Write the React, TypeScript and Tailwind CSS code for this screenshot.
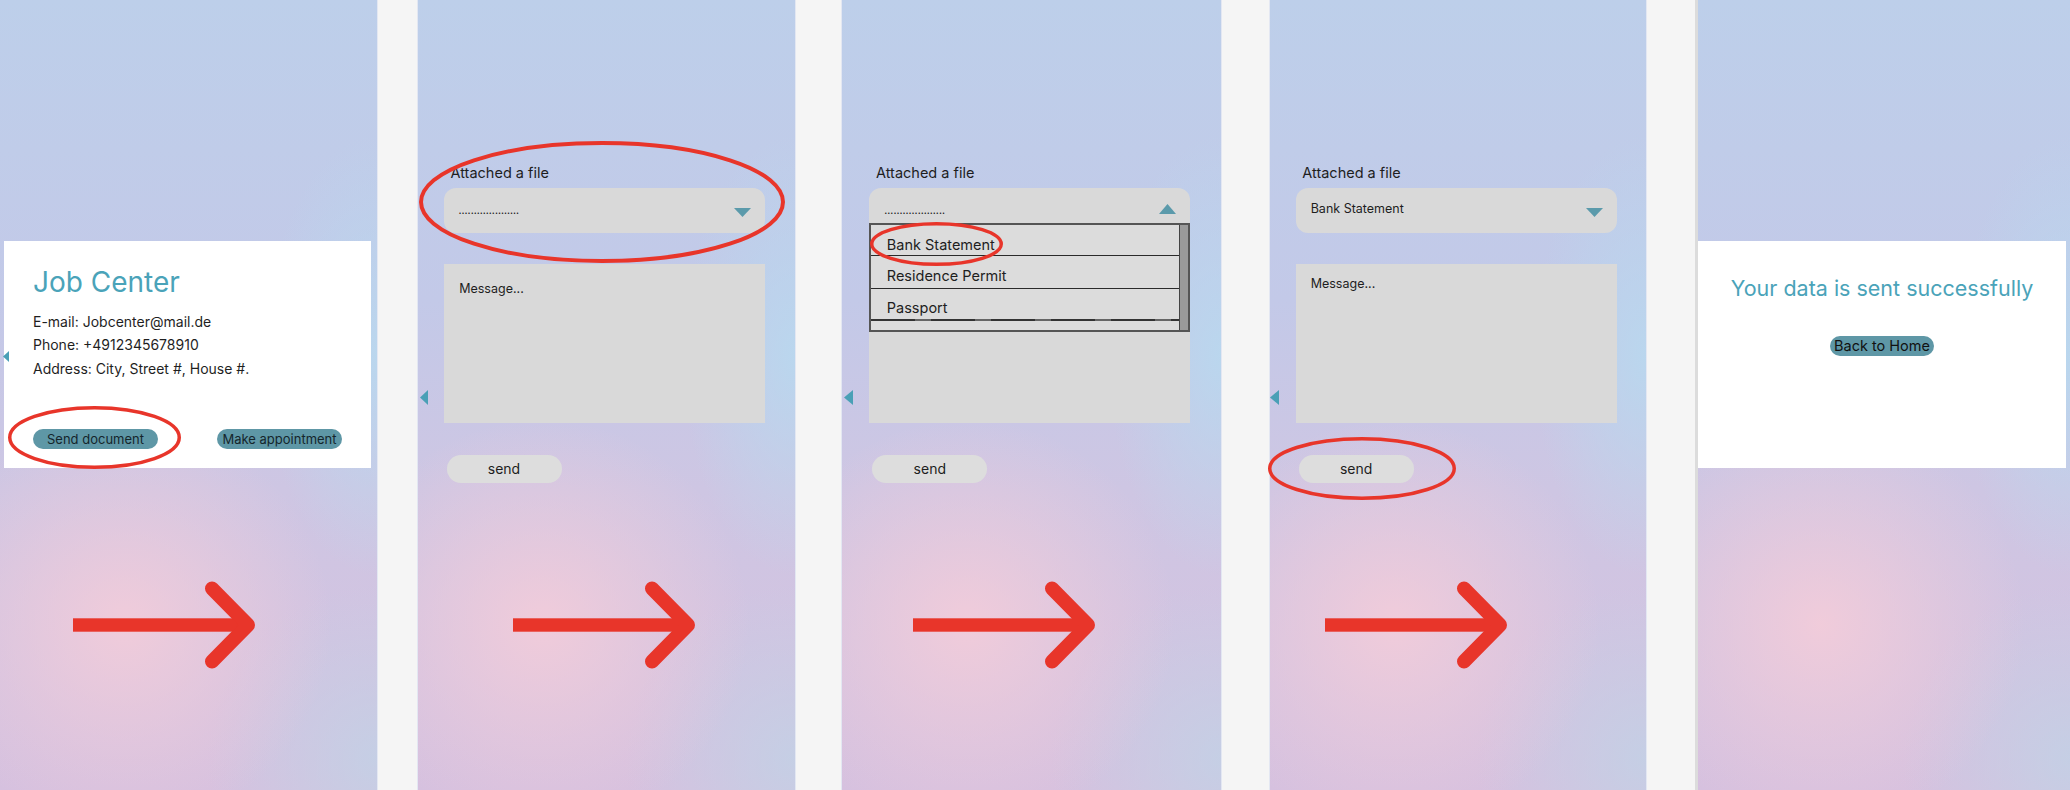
import React from "react";

const BG =
  "[background-image:radial-gradient(ellipse_55%_26%_at_33%_79%,rgba(242,204,218,0.95),rgba(242,204,218,0)),radial-gradient(ellipse_30%_28%_at_100%_45%,rgba(184,217,239,0.85),rgba(184,217,239,0)),radial-gradient(ellipse_45%_22%_at_100%_96%,rgba(193,210,230,0.8),rgba(193,210,230,0)),linear-gradient(180deg,#bdcfea_0%,#c3c9e8_38%,#cec6e3_62%,#d6c1df_100%)]";

function LeftTri({ className }: { className: string }) {
  return (
    <svg className={className} viewBox="0 0 9 15" preserveAspectRatio="none">
      <polygon points="9,0 9,15 0,7.5" fill="#4aa0b6" />
    </svg>
  );
}

function Arrow({ className }: { className: string }) {
  return (
    <svg className={className} width="190" height="96" viewBox="0 0 190 96">
      <rect x="0" y="42.3" width="175" height="13.4" fill="#e8352a" />
      <polyline
        points="139,12.5 175,49 139,85.5"
        fill="none"
        stroke="#e8352a"
        strokeWidth="14"
        strokeLinecap="round"
        strokeLinejoin="round"
      />
    </svg>
  );
}

function Ring({ className, w, h, sw }: { className: string; w: number; h: number; sw: number }) {
  return (
    <svg className={className} width={w} height={h} viewBox={`0 0 ${w} ${h}`}>
      <ellipse
        cx={w / 2}
        cy={h / 2}
        rx={w / 2 - sw / 2}
        ry={h / 2 - sw / 2}
        fill="none"
        stroke="#e8352a"
        strokeWidth={sw}
      />
    </svg>
  );
}

function Dropdown({ children, up }: { children: React.ReactNode; up?: boolean }) {
  return (
    <div className="flex h-[45px] w-[321px] items-start justify-between rounded-[12px] bg-[#d9d9d9] pl-[15px] pr-[14px]">
      {children}
      {up ? (
        <svg className="mt-[16px] h-[10px] w-[17px]" viewBox="0 0 17 10">
          <polygon points="0,10 17,10 8.5,0" fill="#5b9aab" />
        </svg>
      ) : (
        <svg className="mt-[20px] h-[9px] w-[17px]" viewBox="0 0 17 9">
          <polygon points="0,0 17,0 8.5,9" fill="#5b9aab" />
        </svg>
      )}
    </div>
  );
}

function Dots() {
  return (
    <span className="pt-[17px] text-[10px] font-medium leading-[10px] text-[#1a1a1a]">
      ....................
    </span>
  );
}

function SendBtn() {
  return (
    <div className="ml-[3px] mt-[32.3px] h-[28px] w-[115px] rounded-full bg-[#dddddd] text-center text-[14px] leading-[28px] text-[#1e1e1e]">
      send
    </div>
  );
}

function Gap({ className }: { className: string }) {
  return <div className={`h-[790px] shrink-0 border-x border-x-[#e3e7f2] bg-[#f5f5f5] ${className}`} />;
}

export default function App() {
  return (
    <div className="flex h-[790px] w-[2070px] overflow-hidden bg-[#f5f5f5] text-[#1e1e1e] [font-family:Inter,sans-serif]">
      {/* Panel 1 */}
      <div className={`relative h-[790px] w-[377px] shrink-0 pt-[241px] ${BG}`}>
        <div className="ml-[4px] h-[227px] w-[367px] bg-white px-[29px] pt-[26.5px]">
          <div className="text-[28px] leading-[28px] text-[#4aa3b9]">Job Center</div>
          <div className="mt-[14.5px] text-[14px] leading-[23.33px] text-[#1f1f1f]">
            <div>E-mail: Jobcenter@mail.de</div>
            <div>Phone: +4912345678910</div>
            <div>Address: City, Street #, House #.</div>
          </div>
          <div className="mt-[49.3px] flex justify-between">
            <div className="h-[20px] w-[125px] rounded-full bg-[#5e97a6] text-center text-[13px] leading-[20px] text-[#15262c]">
              Send document
            </div>
            <div className="h-[20px] w-[125px] rounded-full bg-[#5e97a6] text-center text-[13px] leading-[20px] text-[#15262c]">
              Make appointment
            </div>
          </div>
        </div>
        <LeftTri className="absolute left-[3px] top-[351px] h-[11px] w-[6px]" />
        <Ring className="absolute left-[8px] top-[406px]" w={173} h={63} sw={3.5} />
        <Arrow className="absolute left-[73px] top-[576px]" />
      </div>

      <Gap className="w-[41px]" />

      {/* Panel 2 */}
      <div className={`relative h-[790px] w-[377px] shrink-0 pl-[25.5px] pt-[165.8px] ${BG}`}>
        <div className="ml-[7px] text-[14.5px] leading-[14.5px]">Attached a file</div>
        <div className="mt-[7.4px]">
          <Dropdown>
            <Dots />
          </Dropdown>
        </div>
        <div className="mt-[31.6px] h-[158.4px] w-[321px] bg-[#d9d9d9] pl-[15.7px] pt-[19px] text-[12.5px] leading-[12.5px]">
          Message...
        </div>
        <SendBtn />
        <LeftTri className="absolute left-[2px] top-[390px] h-[15px] w-[8px]" />
        <Ring className="absolute left-[1px] top-[141px]" w={366} h={122} sw={4} />
        <Arrow className="absolute left-[95px] top-[576px]" />
      </div>

      <Gap className="w-[47px]" />

      {/* Panel 3 */}
      <div className={`relative h-[790px] w-[379px] shrink-0 pl-[27.3px] pt-[165.8px] ${BG}`}>
        <div className="ml-[6.7px] text-[14.5px] leading-[14.5px]">Attached a file</div>
        <div className="relative mt-[7.4px]">
          <Dropdown up>
            <Dots />
          </Dropdown>
          <div className="absolute left-0 top-[35.5px] z-10 flex h-[108.5px] w-[321px] border-2 border-[#555] bg-[#dcdcdc]">
            <div className="flex flex-1 flex-col border-r border-r-[#444] text-[14.5px] leading-[14.5px] text-[#1e1e1e]">
              <div className="h-[31px] border-b-[1.5px] border-b-[#2a2a2a] pl-[15.5px] pt-[13px]">Bank Statement</div>
              <div className="h-[33px] border-b-[1.5px] border-b-[#2a2a2a] pl-[15.5px] pt-[13px]">Residence Permit</div>
              <div className="h-[30px] pl-[15.5px] pt-[12px]">Passport</div>
              <div className="h-[1.5px] [background-image:repeating-linear-gradient(90deg,#333_0_44px,#666_44px_60px)]" />
              <div className="flex-1" />
            </div>
            <div className="w-[8px] bg-[#9a9a9a]" />
          </div>
        </div>
        <div className="mt-[31.6px] h-[158.4px] w-[321px] bg-[#d9d9d9]" />
        <SendBtn />
        <LeftTri className="absolute left-[2px] top-[390px] h-[15px] w-[9px]" />
        <Ring className="absolute left-[28px] top-[221.7px] z-20" w={133} h={44} sw={3.5} />
        <Arrow className="absolute left-[71px] top-[576px]" />
      </div>

      <Gap className="w-[49px]" />

      {/* Panel 4 */}
      <div className={`relative h-[790px] w-[376px] shrink-0 pl-[25.7px] pt-[165.8px] ${BG}`}>
        <div className="ml-[6.6px] text-[14.5px] leading-[14.5px]">Attached a file</div>
        <div className="mt-[7.4px]">
          <Dropdown>
            <span className="pt-[15.2px] text-[12.5px] leading-[12.5px] text-[#1e1e1e]">Bank Statement</span>
          </Dropdown>
        </div>
        <div className="mt-[31.6px] h-[158.4px] w-[321px] bg-[#d9d9d9] pl-[15px] pt-[14px] text-[12.5px] leading-[12.5px]">
          Message...
        </div>
        <SendBtn />
        <LeftTri className="absolute left-[0px] top-[390px] h-[15px] w-[9px]" />
        <Ring className="absolute left-[-2px] top-[436.5px]" w={188} h={63} sw={3.5} />
        <Arrow className="absolute left-[55px] top-[576px]" />
      </div>

      <div className="flex h-[790px] w-[52px] shrink-0 border-l border-l-[#e3e7f2] bg-[#f5f5f5]">
        <div className="flex-1" />
        <div className="w-[3px] bg-[#dcdcdc]" />
      </div>

      {/* Panel 5 */}
      <div className={`relative h-[790px] w-[372px] shrink-0 pt-[241px] ${BG}`}>
        <div className="flex h-[227px] w-[368px] flex-col items-center bg-white pt-[37px]">
          <div className="text-[21.5px] leading-[21.5px] text-[#4aa3b9]">Your data is sent successfully</div>
          <div className="mt-[36.4px] h-[20px] w-[104px] rounded-full bg-[#5e97a6] text-center text-[14.5px] leading-[20px] text-[#111]">
            Back to Home
          </div>
        </div>
      </div>
    </div>
  );
}
